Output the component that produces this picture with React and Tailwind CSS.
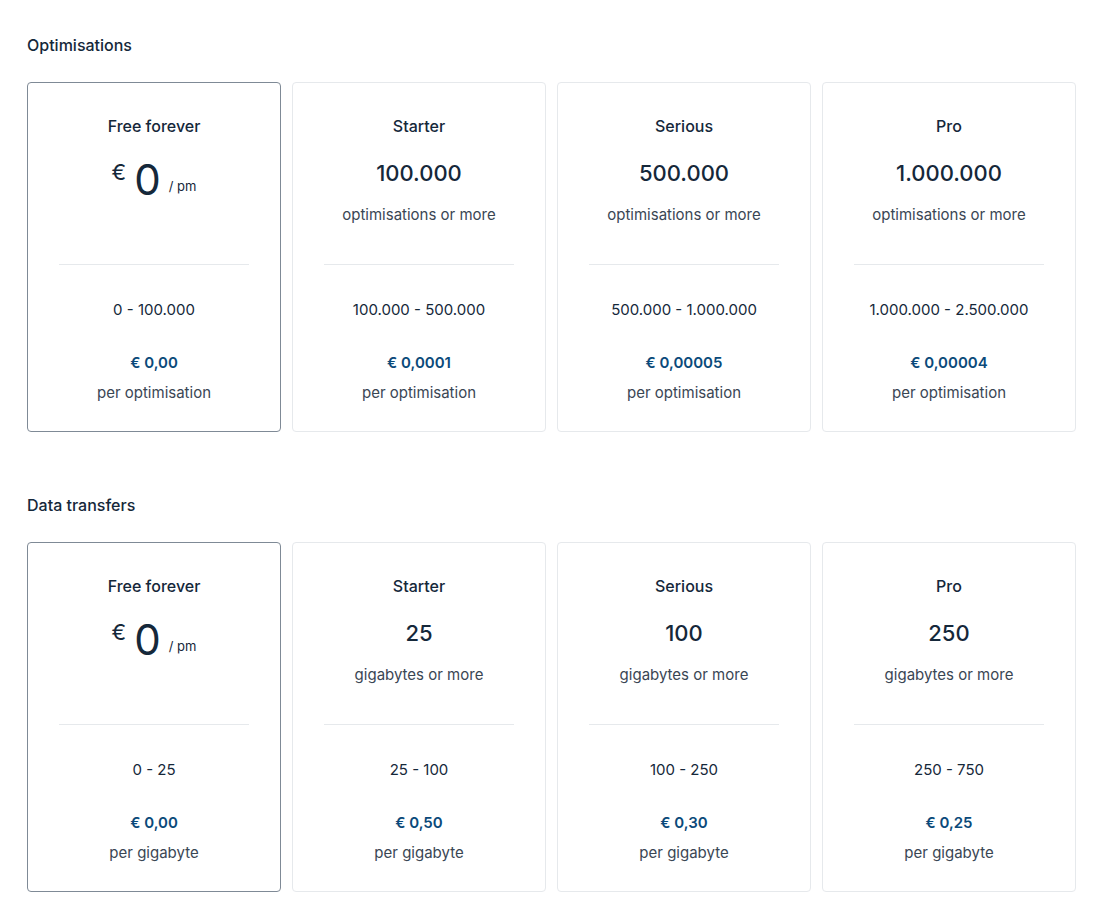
const sections = [
  {
    title: "Optimisations",
    unit: "optimisations or more",
    per: "per optimisation",
    plans: [
      { name: "Free forever", free: true, range: "0 - 100.000", price: "€ 0,00" },
      { name: "Starter", amount: "100.000", range: "100.000 - 500.000", price: "€ 0,0001" },
      { name: "Serious", amount: "500.000", range: "500.000 - 1.000.000", price: "€ 0,00005" },
      { name: "Pro", amount: "1.000.000", range: "1.000.000 - 2.500.000", price: "€ 0,00004" },
    ],
  },
  {
    title: "Data transfers",
    unit: "gigabytes or more",
    per: "per gigabyte",
    plans: [
      { name: "Free forever", free: true, range: "0 - 25", price: "€ 0,00" },
      { name: "Starter", amount: "25", range: "25 - 100", price: "€ 0,50" },
      { name: "Serious", amount: "100", range: "100 - 250", price: "€ 0,30" },
      { name: "Pro", amount: "250", range: "250 - 750", price: "€ 0,25" },
    ],
  },
];

function PlanCard({ plan, unit, per }) {
  return (
    <div
      className={
        "flex h-[350px] flex-col items-center rounded-[4px] border bg-white px-[31px] pt-[31px] text-center " +
        (plan.free ? "border-[#7f8a96]" : "border-[#e6e9ec]")
      }
    >
      <div className="text-[16px] font-medium leading-6">{plan.name}</div>
      {plan.free ? (
        <div className="mt-[19px] flex h-[78px] items-start justify-center">
          <span className="mt-[4px] text-[22px] leading-none">€</span>
          <span className="ml-[8px] text-[42px] leading-[46px]">0</span>
          <span className="ml-[8px] mt-[20px] text-[13px]">/ pm</span>
        </div>
      ) : (
        <div className="mt-[19px] h-[78px]">
          <div className="text-[22px] font-medium leading-[32px]">{plan.amount}</div>
          <div className="mt-[14px] text-[15px] leading-6 text-[#3a4654]">{unit}</div>
        </div>
      )}
      <div className="mt-[29px] h-px w-full bg-[#e6e9ec]" />
      <div className="mt-[33px] text-[15px] leading-6">{plan.range}</div>
      <div className="mt-[29px] text-[15px] font-semibold leading-6 text-[#0b4a7a]">{plan.price}</div>
      <div className="mt-[6px] text-[15px] leading-6 text-[#3a4654]">{per}</div>
    </div>
  );
}

export default function App() {
  return (
    <div className="min-h-[921px] bg-white px-[27px] pt-[33px] text-[#15283a]" style={{ fontFamily: "Inter, 'Noto Sans', sans-serif" }}>
      {sections.map((s, i) => (
        <section key={s.title} className={i ? "mt-[61px]" : ""}>
          <h2 className="text-[16px] font-medium leading-6">{s.title}</h2>
          <div className="mt-[25px] grid w-[1049px] grid-cols-4 gap-[11px]">
            {s.plans.map((p) => (
              <PlanCard key={p.name} plan={p} unit={s.unit} per={s.per} />
            ))}
          </div>
        </section>
      ))}
    </div>
  );
}
